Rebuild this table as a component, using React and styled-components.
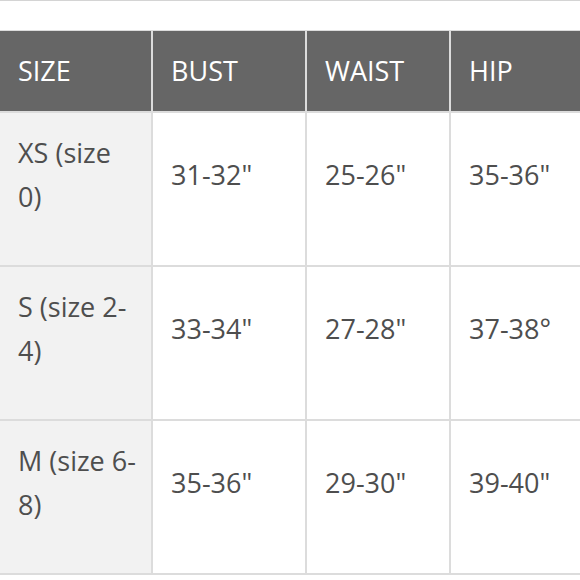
import React from "react";
import styled, { createGlobalStyle } from "styled-components";

const GlobalStyle = createGlobalStyle`
    html, body {
        margin: 0;
        padding: 0;
        background: #ffffff;
        overflow: hidden;
    }
    body {
        font-family: "Open Sans", "Noto Sans", sans-serif;
    }
`;

const columns = ["SIZE", "BUST", "WAIST", "HIP"];

const rows = [
    { size: "XS (size 0)", bust: "31-32\"", waist: "25-26\"", hip: "35-36\"" },
    { size: "S (size 2-4)", bust: "33-34\"", waist: "27-28\"", hip: "37-38°" },
    { size: "M (size 6-8)", bust: "35-36\"", waist: "29-30\"", hip: "39-40\"" },
];

const App = () => {
    return (
        <>
            <GlobalStyle />
            <Page>
                <TopRule />
                <Chart>
                    {columns.map((col) => (
                        <HeadCell key={col}>{col}</HeadCell>
                    ))}
                    {rows.map((row) => (
                        <React.Fragment key={row.size}>
                            <Cell shaded>{row.size}</Cell>
                            <Cell>{row.bust}</Cell>
                            <Cell>{row.waist}</Cell>
                            <Cell>{row.hip}</Cell>
                        </React.Fragment>
                    ))}
                </Chart>
            </Page>
        </>
    );
};

const Page = styled.div`
    width: 580px;
    height: 580px;
    overflow: hidden;
`;

const TopRule = styled.div`
    height: 1px;
    background: #d4d4d4;
`;

const Chart = styled.div`
    margin-top: 29px;
    width: 620px;
    display: grid;
    grid-template-columns: 151px 152px 142px 1fr;
    gap: 2px;
    background: #dcdcdc;
    border-top: 1px solid #dcdcdc;
    border-bottom: 2px solid #dcdcdc;
    font-size: 27px;
    line-height: 44px;
`;

const HeadCell = styled.div`
    background: #666666;
    color: #ffffff;
    padding: 18px 18px;
    height: 44px;
`;

const Cell = styled.div`
    background: ${(p) => (p.shaded ? "#f2f2f2" : "#ffffff")};
    color: #4e4e4e;
    padding: 18px ${(p) => (p.shaded ? "12px" : "18px")} 46px 18px;
    display: flex;
    align-items: center;
    min-height: 88px;
`;

export default App;
